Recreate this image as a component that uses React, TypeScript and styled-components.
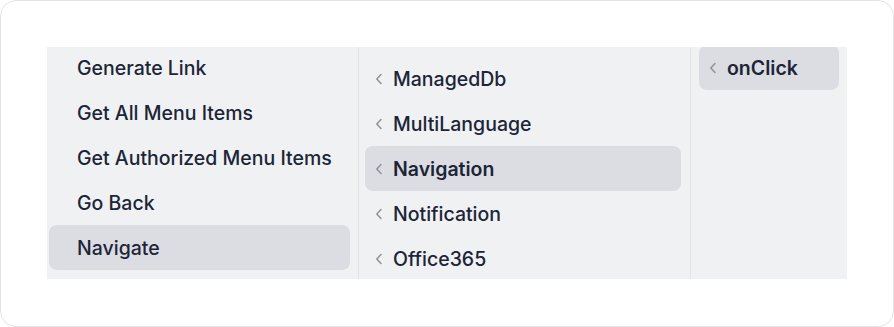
import styled, { createGlobalStyle } from 'styled-components'

const GlobalStyle = createGlobalStyle`
  html, body {
    margin: 0;
    padding: 0;
    background: #ffffff;
  }
  body {
    font-family: Inter, "Noto Sans", sans-serif;
    -webkit-font-smoothing: antialiased;
  }
`

const Card = styled.div`
  box-sizing: border-box;
  width: 894px;
  height: 327px;
  padding: 46px;
  border: 1px solid #e1e3e7;
  border-radius: 16px;
  background: #fff;
`

const Panel = styled.div`
  display: flex;
  width: 800px;
  height: 232px;
  background: #f0f1f3;
  overflow: hidden;
`

const Column = styled.div<{ $width?: number; $last?: boolean }>`
  box-sizing: border-box;
  flex: ${(p) => (p.$width ? `0 0 ${p.$width}px` : '1 1 auto')};
  height: 100%;
  overflow: hidden;
  border-right: ${(p) => (p.$last ? 'none' : '1px solid #e1e3e7')};
`

const List = styled.ul<{ $top: number; $left: number; $right: number }>`
  list-style: none;
  margin: ${(p) => p.$top}px ${(p) => p.$right}px 0 ${(p) => p.$left}px;
  padding: 0;
`

const Item = styled.li<{ $active?: boolean; $strong?: boolean }>`
  display: flex;
  align-items: center;
  height: 45px;
  padding: 0 10px;
  border-radius: 8px;
  background: ${(p) => (p.$active ? '#dcdde2' : 'transparent')};
  color: #1c2537;
  font-size: 19.5px;
  font-weight: ${(p) => (p.$active && p.$strong ? 600 : 500)};
  white-space: nowrap;
  cursor: pointer;
`

const Chevron = styled.svg<{ $hidden?: boolean }>`
  flex: none;
  width: 8px;
  height: 12px;
  margin: 1px 10px 0 0;
  visibility: ${(p) => (p.$hidden ? 'hidden' : 'visible')};
`

const Label = styled.span`
  line-height: 1;
  padding-top: 2px;
`

type Entry = { label: string; active?: boolean }

const ChevronLeft = ({ hidden }: { hidden?: boolean }) => (
  <Chevron $hidden={hidden} viewBox="0 0 8 12">
    <polyline
      points="6,1.5 1.8,6 6,10.5"
      fill="none"
      stroke="#8d929b"
      strokeWidth="1.5"
      strokeLinecap="round"
      strokeLinejoin="round"
    />
  </Chevron>
)

const actions: Entry[] = [
  { label: 'Generate Link' },
  { label: 'Get All Menu Items' },
  { label: 'Get Authorized Menu Items' },
  { label: 'Go Back' },
  { label: 'Navigate', active: true },
]

const modules: Entry[] = [
  { label: 'ManagedDb' },
  { label: 'MultiLanguage' },
  { label: 'Navigation', active: true },
  { label: 'Notification' },
  { label: 'Office365' },
]

const events: Entry[] = [{ label: 'onClick', active: true }]

export default function App() {
  return (
    <>
      <GlobalStyle />
      <Card>
        <Panel>
          <Column $width={312}>
            <List $top={-2} $left={2} $right={8}>
              {actions.map((a) => (
                <Item key={a.label} $active={a.active}>
                  <ChevronLeft hidden />
                  <Label>{a.label}</Label>
                </Item>
              ))}
            </List>
          </Column>
          <Column $width={332}>
            <List $top={9} $left={6} $right={9}>
              {modules.map((m) => (
                <Item key={m.label} $active={m.active} $strong>
                  <ChevronLeft />
                  <Label>{m.label}</Label>
                </Item>
              ))}
            </List>
          </Column>
          <Column $last>
            <List $top={-2} $left={8} $right={8}>
              {events.map((e) => (
                <Item key={e.label} $active={e.active} $strong>
                  <ChevronLeft />
                  <Label>{e.label}</Label>
                </Item>
              ))}
            </List>
          </Column>
        </Panel>
      </Card>
    </>
  )
}
